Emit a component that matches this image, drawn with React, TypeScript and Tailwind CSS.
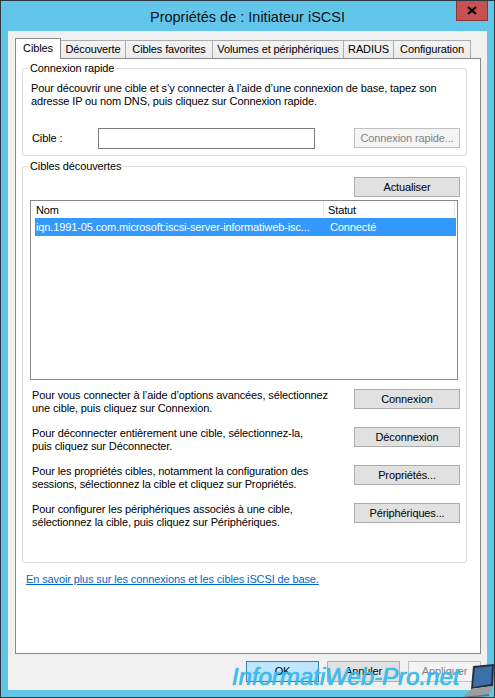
export default function App() {
  const btn =
    "w-[106px] h-[20px] border border-[#adadad] bg-[#e1e1e1] flex items-center justify-center";
  return (
    <div className="relative w-[495px] h-[698px] border border-[#2b3a42] bg-[#62c6ea] flex flex-col font-['Liberation_Sans',Arial,sans-serif] text-[11px] leading-[13px] tracking-[-0.12px] text-black overflow-hidden">
      {/* Title bar */}
      <div className="h-[30px] grid grid-cols-[1fr_auto_1fr] shrink-0">
        <div />
        <div className="self-center font-['Liberation_Sans',Arial,sans-serif] text-[14.5px] tracking-normal leading-[20px] text-[#111] pt-[1px]">
          Propriétés de : Initiateur iSCSI
        </div>
        <div className="justify-self-end self-start mr-[6px]">
          <div className="w-[32px] h-[20px] bg-[#c75050] border-x border-b border-[#8f3434] flex items-center justify-center">
            <svg width="10" height="9" viewBox="0 0 10 9">
              <path d="M1 1 L9 8 M9 1 L1 8" stroke="#000" strokeWidth="2.2" />
            </svg>
          </div>
        </div>
      </div>

      {/* Client area */}
      <div className="mx-[7px] h-[659px] bg-[#f0f0f0] pl-[7px] pr-[6px] pt-[7px] flex flex-col shrink-0">
        {/* Tabs */}
        <div className="flex items-end h-[20px]">
          <div className="relative z-10 h-[21px] -mb-px w-[46px] bg-white border border-b-0 border-[#898989] text-center pt-[3px]">
            Cibles
          </div>
          <div className="h-[18px] -ml-px w-[66px] border border-b-0 border-[#acacac] bg-gradient-to-b from-[#f3f3f3] to-[#ebebeb] text-center pt-[2px]">
            Découverte
          </div>
          <div className="h-[18px] -ml-px w-[88px] border border-b-0 border-[#acacac] bg-gradient-to-b from-[#f3f3f3] to-[#ebebeb] text-center pt-[2px]">
            Cibles favorites
          </div>
          <div className="h-[18px] -ml-px w-[132px] border border-b-0 border-[#acacac] bg-gradient-to-b from-[#f3f3f3] to-[#ebebeb] text-center pt-[2px]">
            Volumes et périphériques
          </div>
          <div className="h-[18px] -ml-px w-[51px] border border-b-0 border-[#acacac] bg-gradient-to-b from-[#f3f3f3] to-[#ebebeb] text-center pt-[2px]">
            RADIUS
          </div>
          <div className="h-[18px] -ml-px w-[78px] border border-b-0 border-[#acacac] bg-gradient-to-b from-[#f3f3f3] to-[#ebebeb] text-center pt-[2px]">
            Configuration
          </div>
        </div>

        {/* Tab pane */}
        <div className="border border-[#898989] bg-white h-[596px] flex flex-col pl-[6px] pt-[3px]">
          {/* Connexion rapide */}
          <fieldset className="w-[445px] border border-[#dcdcdc] rounded-[3px] pl-[8px] pr-[6px] pt-[7px] pb-[6px]">
            <legend className="-ml-[3px] px-[2px] leading-[13px]">Connexion rapide</legend>
            <p>
              Pour découvrir une cible et s’y connecter à l’aide d’une connexion de base, tapez son
              <br />
              adresse IP ou nom DNS, puis cliquez sur Connexion rapide.
            </p>
            <div className="mt-[20px] flex items-start h-[21px]">
              <div className="w-[67px] pl-px pt-[4px]">Cible :</div>
              <div className="w-[217px] h-[21px] border border-[#7a7a7a] bg-white" />
              <div className="ml-auto w-[106px] h-[20px] border border-[#bfbfbf] bg-[#f4f4f4] text-[#838383] flex items-center justify-center">
                Connexion rapide...
              </div>
            </div>
          </fieldset>

          {/* Cibles découvertes */}
          <fieldset className="mt-[4px] w-[445px] border border-[#dcdcdc] rounded-[3px] pl-[8px] pr-[6px] pt-[4px] pb-[33px]">
            <legend className="-ml-[3px] px-[2px] leading-[13px]">Cibles découvertes</legend>
            <div className="flex justify-end">
              <div className={btn}>Actualiser</div>
            </div>
            <div className="mt-[3px] -ml-px w-[428px] h-[180px] border border-[#828790] bg-white flex flex-col">
              <div className="h-[17px] flex shrink-0">
                <div className="w-[293px] pl-[5px] pt-[3px] border-r border-[#e5e5e5]">Nom</div>
                <div className="w-[131px] pl-[4px] pt-[3px] border-r border-[#e5e5e5]">Statut</div>
              </div>
              <div className="ml-[4px] w-[421px] h-[18px] bg-[#3399ff] text-white flex items-center whitespace-nowrap">
                <div className="w-[289px] pl-px overflow-hidden">
                  iqn.1991-05.com.microsoft:iscsi-server-informatiweb-isc...
                </div>
                <div className="pl-[6px]">Connecté</div>
              </div>
            </div>

            <div className="mt-[9px] flex flex-col gap-[12px]">
              <div className="flex justify-between items-start">
                <p className="pl-px">
                  Pour vous connecter à l’aide d’options avancées, sélectionnez
                  <br />
                  une cible, puis cliquez sur Connexion.
                </p>
                <div className={btn}>Connexion</div>
              </div>
              <div className="flex justify-between items-start">
                <p className="pl-px">
                  Pour déconnecter entièrement une cible, sélectionnez-la,
                  <br />
                  puis cliquez sur Déconnecter.
                </p>
                <div className={btn}>Déconnexion</div>
              </div>
              <div className="flex justify-between items-start">
                <p className="pl-px">
                  Pour les propriétés cibles, notamment la configuration des
                  <br />
                  sessions, sélectionnez la cible et cliquez sur Propriétés.
                </p>
                <div className={btn}>Propriétés...</div>
              </div>
              <div className="flex justify-between items-start">
                <p className="pl-px">
                  Pour configurer les périphériques associés à une cible,
                  <br />
                  sélectionnez la cible, puis cliquez sur Périphériques.
                </p>
                <div className={btn}>Périphériques...</div>
              </div>
            </div>
          </fieldset>

          <div className="mt-[10px] ml-[4px] text-[#0066cc] underline">
            En savoir plus sur les connexions et les cibles iSCSI de base.
          </div>
        </div>

        {/* Dialog buttons */}
        <div className="mt-[7px] flex justify-end gap-[8px]">
          <div className="w-[73px] h-[21px] border border-[#3c7fb1] bg-[#bee6fd] flex items-center justify-center">
            OK
          </div>
          <div className="w-[73px] h-[21px] border border-[#adadad] bg-[#e1e1e1] flex items-center justify-center">
            Annuler
          </div>
          <div className="w-[73px] h-[21px] border border-[#bfbfbf] bg-[#f4f4f4] text-[#838383] flex items-center justify-center">
            Appliquer
          </div>
        </div>
      </div>

      {/* Watermark */}
      <div className="absolute left-[231px] top-[664px] text-[24px] leading-none italic tracking-normal text-[#3cbfef] font-['Liberation_Sans',Arial,sans-serif] [text-shadow:0_0_1px_#1a8fc4]">
        InformatiWeb-Pro.net
      </div>
      <svg className="absolute left-[458px] top-[663px]" width="37" height="34" viewBox="0 0 37 34">
        <polygon points="14,2 35,0 34,22 12,25" fill="#23313f" />
        <polygon points="16,4 33,2 32,20 14,23" fill="#3a6fa8" />
        <polygon points="12,25 34,22 30,30 4,33" fill="#9a9ea3" />
        <polygon points="4,33 30,30 30,32 4,34" fill="#6b6f74" />
      </svg>
    </div>
  );
}
